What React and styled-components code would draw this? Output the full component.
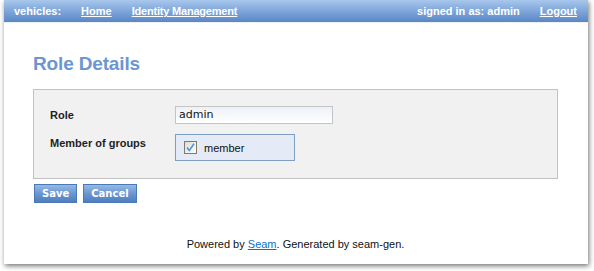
import React from "react";
import styled, { createGlobalStyle } from "styled-components";

const Global = createGlobalStyle`
  html, body { margin: 0; padding: 0; background: #ffffff; }
  body { font-family: "Liberation Sans", Arial, sans-serif; }
`;

const Frame = styled.div`
  width: 594px;
  height: 271px;
  padding-left: 4px;
  box-sizing: border-box;
  overflow: hidden;
`;

const Window = styled.div`
  width: 584px;
  height: 264px;
  background: #ffffff;
  box-shadow: 1px 2px 5px rgba(0, 0, 0, 0.55);
  display: flex;
  flex-direction: column;
`;

const TopBar = styled.div`
  height: 22px;
  flex: none;
  display: flex;
  align-items: center;
  padding: 0 11px 0 10px;
  background: linear-gradient(to bottom, #a8c7ec 0%, #7ea6d9 50%, #5a87c5 100%);
  border-bottom: 1px solid #eef2f8;
  font-size: 11px;
  font-weight: bold;
  color: #ffffff;
`;

const BarGroup = styled.div`
  display: flex;
  align-items: center;
  gap: 20px;
  margin-left: ${(p) => (p.$right ? "auto" : "0")};
`;

const BarText = styled.span`
  color: #ffffff;
`;

const BarLink = styled.a`
  color: #ffffff;
  text-decoration: underline;
  letter-spacing: ${(p) => p.$tight ? "-0.2px" : "0"};
`;

const Content = styled.div`
  padding: 0 30px 0 29px;
  display: flex;
  flex-direction: column;
`;

const Title = styled.h1`
  margin: 30px 0 14px;
  font-size: 19px;
  line-height: 22px;
  font-weight: bold;
  letter-spacing: -0.15px;
  color: #6b96d1;
`;

const Panel = styled.div`
  border: 1px solid #c2c2c2;
  background: #f1f1f1;
  padding: 16px 16px 17px;
  display: grid;
  grid-template-columns: 125px auto;
  row-gap: 10px;
  align-items: start;
`;

const Label = styled.div`
  font-size: 11px;
  font-weight: bold;
  color: #1e1e1e;
  line-height: 13px;
  padding-top: ${(p) => p.$top || 0}px;
`;

const Input = styled.div`
  width: 153px;
  height: 16px;
  border: 1px solid #c4c4c4;
  background: linear-gradient(to bottom, #edf1f8 0%, #ffffff 100%);
  font-family: "DejaVu Sans", sans-serif;
  font-size: 11px;
  line-height: 16px;
  color: #111;
  padding-left: 3px;
  box-sizing: content-box;
`;

const GroupBox = styled.div`
  height: 25px;
  width: 110px;
  border: 1px solid #7e9ec4;
  background: #e4ebf6;
  display: flex;
  align-items: center;
  padding-left: 8px;
  gap: 7px;
  box-sizing: content-box;
`;

const CheckText = styled.span`
  font-size: 11px;
  color: #111;
`;

const Buttons = styled.div`
  display: flex;
  gap: 6px;
  margin: 5px 0 0 1px;
`;

const Button = styled.button`
  height: 19px;
  padding: 0 7px;
  border: 1px solid #4b79b7;
  background: linear-gradient(to bottom, #97b9e3 0%, #6b97d2 50%, #4e7ebf 100%);
  color: #ffffff;
  font-family: "DejaVu Sans", sans-serif;
  font-weight: bold;
  font-size: 10px;
  line-height: 17px;
  cursor: pointer;
`;

const Footer = styled.div`
  margin-top: 34px;
  text-align: center;
  font-size: 11px;
  line-height: 14px;
  color: #111;
`;

const FootLink = styled.a`
  color: #0a6fd0;
  text-decoration: underline;
`;

function CheckIcon() {
  return (
    <svg width="13" height="13" viewBox="0 0 13 13">
      <defs>
        <linearGradient id="cb" x1="0" y1="0" x2="1" y2="1">
          <stop offset="0" stopColor="#dcdad5" />
          <stop offset="1" stopColor="#ffffff" />
        </linearGradient>
      </defs>
      <rect x="0.5" y="0.5" width="12" height="12" fill="url(#cb)" stroke="#84796b" />
      <path d="M3 6.5 L5.3 9.5 L10 2.8" fill="none" stroke="#4d95df" strokeWidth="1.6" />
    </svg>
  );
}

export default function App() {
  return (
    <>
      <Global />
      <Frame>
        <Window>
          <TopBar>
            <BarGroup>
              <BarText>vehicles:</BarText>
              <BarLink href="#">Home</BarLink>
              <BarLink href="#" $tight>Identity Management</BarLink>
            </BarGroup>
            <BarGroup $right>
              <BarText>signed in as: admin</BarText>
              <BarLink href="#">Logout</BarLink>
            </BarGroup>
          </TopBar>
          <Content>
            <Title>Role Details</Title>
            <Panel>
              <Label $top={3}>Role</Label>
              <Input>admin</Input>
              <Label $top={3}>Member of groups</Label>
              <GroupBox>
                <CheckIcon />
                <CheckText>member</CheckText>
              </GroupBox>
            </Panel>
            <Buttons>
              <Button>Save</Button>
              <Button>Cancel</Button>
            </Buttons>
            <Footer>
              Powered by <FootLink href="#">Seam</FootLink>. Generated by seam-gen.
            </Footer>
          </Content>
        </Window>
      </Frame>
    </>
  );
}
